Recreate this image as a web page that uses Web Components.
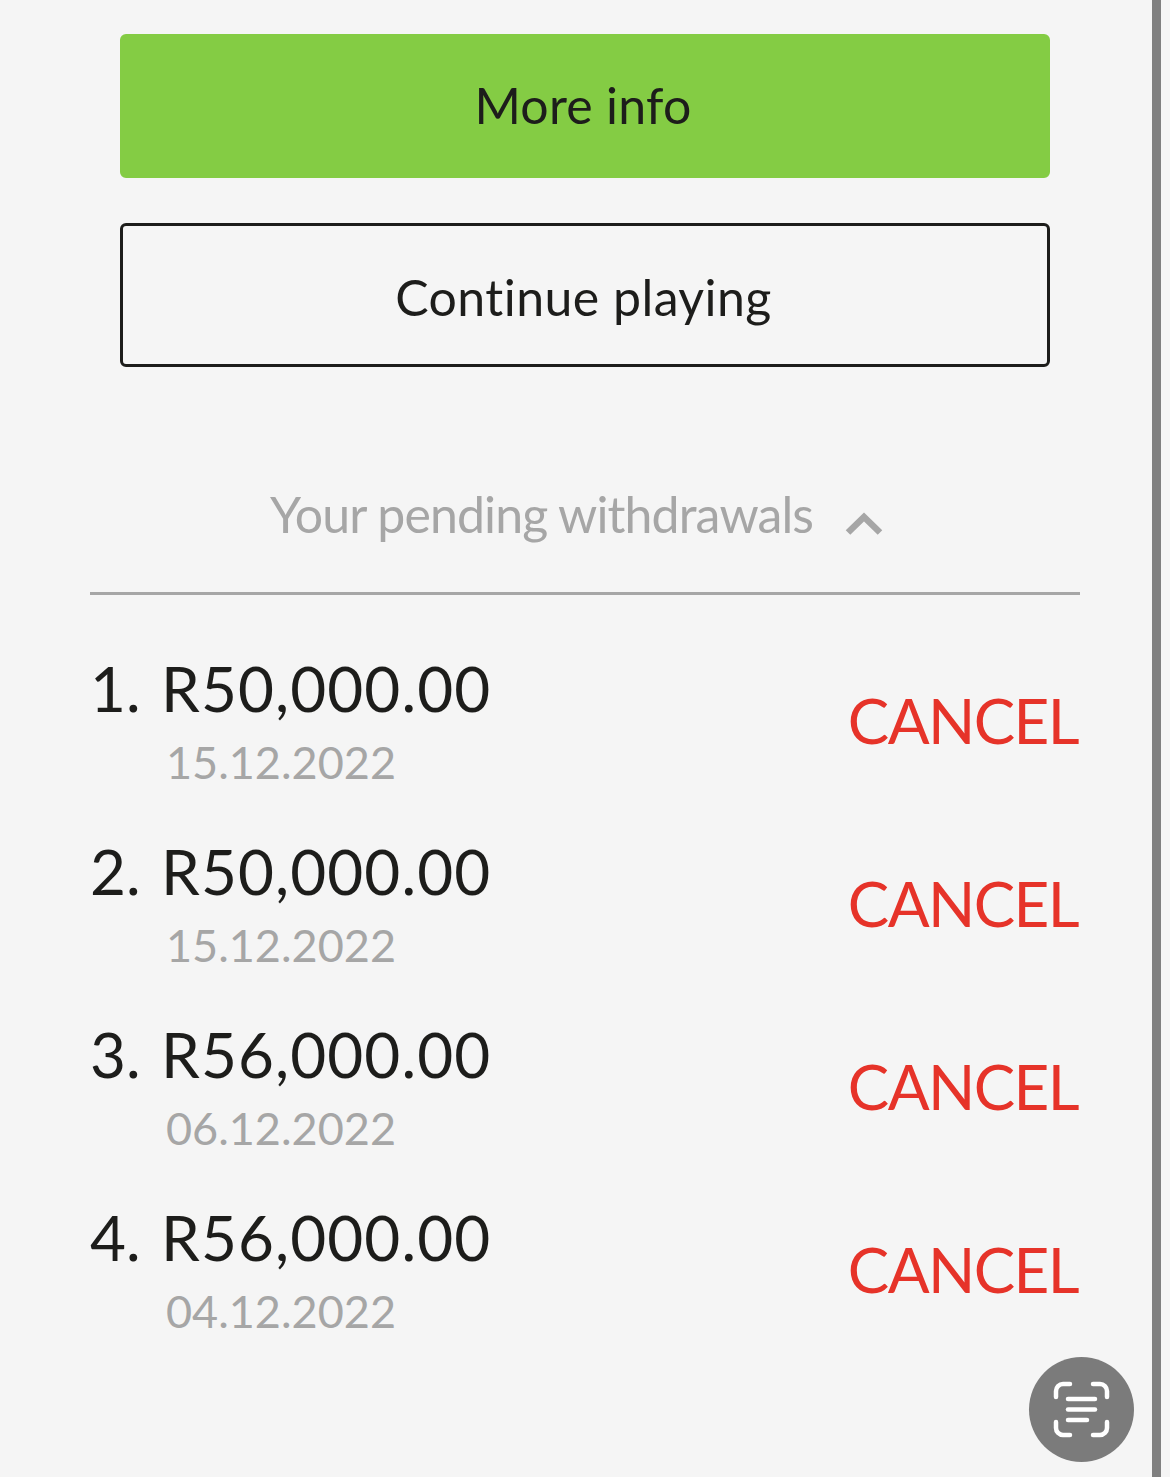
<!DOCTYPE html>
<html lang="en">
<head>
<meta charset="utf-8">
<title>Pending withdrawals</title>
<style>
  html, body { margin: 0; height: 100%; }
  body { background: #f5f5f5; color: #1d1d1b; font-family: Lato, "Open Sans", sans-serif; font-variant-ligatures: none; overflow: hidden; }
</style>
</head>
<body>
<withdrawals-page>
  <action-button variant="primary">More info</action-button>
  <action-button>Continue playing</action-button>
  <pending-header>Your pending withdrawals</pending-header>
  <withdrawal-row index="1." amount="R50,000.00" date="15.12.2022"></withdrawal-row>
  <withdrawal-row index="2." amount="R50,000.00" date="15.12.2022"></withdrawal-row>
  <withdrawal-row index="3." amount="R56,000.00" date="06.12.2022"></withdrawal-row>
  <withdrawal-row index="4." amount="R56,000.00" date="04.12.2022"></withdrawal-row>
  <scan-button></scan-button>
</withdrawals-page>

<script>
class WithdrawalsPage extends HTMLElement {
  constructor() {
    super();
    this.attachShadow({ mode: 'open' });
    this.shadowRoot.innerHTML = `
      <style>
        :host {
          display: block;
          position: relative;
          width: 1170px;
          height: 1477px;
          box-sizing: border-box;
          padding: 34px 90px 0;
          overflow: hidden;
        }
        .bar {
          position: absolute;
          top: 0;
          bottom: 0;
          left: 1152px;
          width: 9px;
          background: #808080;
        }
      </style>
      <slot></slot>
      <div class="bar"></div>
    `;
  }
}

class ActionButton extends HTMLElement {
  constructor() {
    super();
    this.attachShadow({ mode: 'open' });
    this.shadowRoot.innerHTML = `
      <style>
        :host {
          display: flex;
          align-items: center;
          justify-content: center;
          box-sizing: border-box;
          height: 144px;
          margin: 0 30px 45px;
          border: 3px solid #1d1d1b;
          border-radius: 6px;
          font-size: 50px;
          font-weight: 400;
          letter-spacing: 0.45px;
          color: #1d1d1b;
          padding-top: 4px;
          padding-right: 3px;
        }
        :host([variant="primary"]) {
          background: #84cc44;
          border-color: #84cc44;
          letter-spacing: 0.25px;
          padding-top: 0;
          padding-bottom: 3px;
          padding-right: 4px;
        }
      </style>
      <slot></slot>
    `;
  }
}

class PendingHeader extends HTMLElement {
  constructor() {
    super();
    this.attachShadow({ mode: 'open' });
    this.shadowRoot.innerHTML = `
      <style>
        :host {
          display: flex;
          align-items: center;
          justify-content: center;
          gap: 32px;
          box-sizing: border-box;
          height: 183px;
          padding-top: 23px;
          padding-right: 17px;
          border-bottom: 3px solid #a6a6a6;
          font-size: 50px;
          font-weight: 400;
          letter-spacing: -0.9px;
          color: #a6a6a6;
        }
        svg { width: 38px; height: 24px; margin-top: 18px; }
      </style>
      <span><slot></slot></span>
      <svg viewBox="0 0 38 24" aria-hidden="true">
        <path d="M3 21.500 19 6 35 21.500" fill="none" stroke="#a6a6a6" stroke-width="6.500"/>
      </svg>
    `;
  }
}

class WithdrawalRow extends HTMLElement {
  constructor() {
    super();
    this.attachShadow({ mode: 'open' });
    this.shadowRoot.innerHTML = `
      <style>
        :host {
          display: flex;
          justify-content: space-between;
          height: 183px;
          box-sizing: border-box;
          padding-top: 55px;
        }
        .left { display: grid; grid-template-columns: 72px auto; align-content: start; }
        .num, .amount { font-size: 62px; line-height: 76px; font-weight: 400; color: #1d1d1b; }
        .amount { margin-left: -1px; letter-spacing: 1.1px; }
        .date {
          grid-column: 1 / -1;
          width: 306px;
          margin-top: 1px;
          text-align: right;
          font-size: 45px;
          line-height: 70px;
          font-weight: 400;
          color: #a6a6a6;
        }
        .cancel {
          align-self: flex-start;
          margin: 31px 2px 0 0;
          font-size: 62px;
          line-height: 78px;
          font-weight: 400;
          letter-spacing: -1.600px;
          color: #e63329;
        }
      </style>
      <div class="left">
        <span class="num"></span>
        <span class="amount"></span>
        <span class="date"></span>
      </div>
      <span class="cancel">CANCEL</span>
    `;
  }

  connectedCallback() {
    this.shadowRoot.querySelector('.num').textContent = this.getAttribute('index');
    this.shadowRoot.querySelector('.amount').textContent = this.getAttribute('amount');
    this.shadowRoot.querySelector('.date').textContent = this.getAttribute('date');
  }
}

class ScanButton extends HTMLElement {
  constructor() {
    super();
    this.attachShadow({ mode: 'open' });
    this.shadowRoot.innerHTML = `
      <style>
        :host {
          position: absolute;
          left: 1029px;
          top: 1357px;
          width: 105px;
          height: 105px;
          border-radius: 50%;
          background: #7b7b7b;
          display: flex;
          align-items: center;
          justify-content: center;
        }
        svg { width: 105px; height: 105px; }
      </style>
      <svg viewBox="0 0 105 105" aria-hidden="true" fill="none" stroke="#fff" stroke-width="4.500" stroke-linecap="round">
        <path d="M27 40V34a7 7 0 0 1 7-7h7"/>
        <path d="M64 27h7a7 7 0 0 1 7 7v6"/>
        <path d="M27 65v6a7 7 0 0 0 7 7h7"/>
        <path d="M78 65v6a7 7 0 0 1-7 7h-7"/>
        <path d="M39 42h27"/>
        <path d="M39 52.500h27"/>
        <path d="M39 63h19"/>
      </svg>
    `;
  }
}

customElements.define('withdrawals-page', WithdrawalsPage);
customElements.define('action-button', ActionButton);
customElements.define('pending-header', PendingHeader);
customElements.define('withdrawal-row', WithdrawalRow);
customElements.define('scan-button', ScanButton);
</script>
</body>
</html>
